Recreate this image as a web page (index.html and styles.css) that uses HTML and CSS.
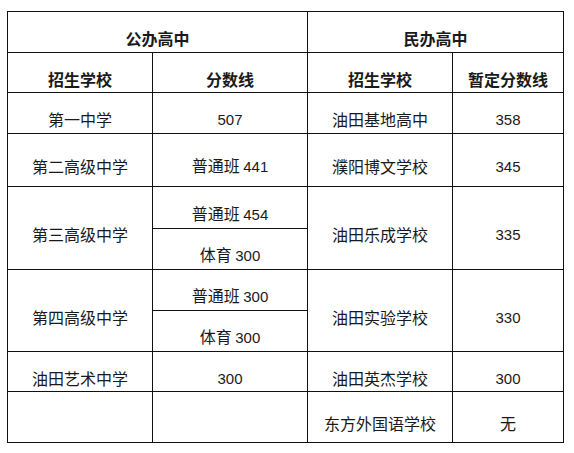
FILE: index.html
```html
<!DOCTYPE html>
<html lang="zh">
<head>
<meta charset="utf-8">
<link rel="stylesheet" href="styles.css">
</head>
<body>
<table class="scores">
  <colgroup>
    <col class="c1"><col class="c2"><col class="c3"><col class="c4">
  </colgroup>
  <tr class="h41">
    <th colspan="2">公办高中</th>
    <th colspan="2">民办高中</th>
  </tr>
  <tr class="h40">
    <th>招生学校</th><th>分数线</th><th>招生学校</th><th>暂定分数线</th>
  </tr>
  <tr class="h41">
    <td>第一中学</td><td><span class="num">507</span></td><td>油田基地高中</td><td><span class="num">358</span></td>
  </tr>
  <tr class="h53">
    <td>第二高级中学</td><td>普通班 <span class="num">441</span></td><td>濮阳博文学校</td><td><span class="num">345</span></td>
  </tr>
  <tr class="h42">
    <td rowspan="2">第三高级中学</td><td>普通班 <span class="num">454</span></td><td rowspan="2">油田乐成学校</td><td rowspan="2"><span class="num">335</span></td>
  </tr>
  <tr class="h41">
    <td>体育 <span class="num">300</span></td>
  </tr>
  <tr class="h41">
    <td rowspan="2">第四高级中学</td><td>普通班 <span class="num">300</span></td><td rowspan="2">油田实验学校</td><td rowspan="2"><span class="num">330</span></td>
  </tr>
  <tr class="h41">
    <td>体育 <span class="num">300</span></td>
  </tr>
  <tr class="h40">
    <td>油田艺术中学</td><td><span class="num">300</span></td><td>油田英杰学校</td><td><span class="num">300</span></td>
  </tr>
  <tr class="h51">
    <td></td><td></td><td>东方外国语学校</td><td>无</td>
  </tr>
</table>
</body>
</html>
```

FILE: styles.css
```css
html, body {
  margin: 0;
  padding: 0;
  background: #ffffff;
}

body {
  padding: 11px 0 0 7px;
}

.scores {
  border-collapse: collapse;
  table-layout: fixed;
  width: 556px;
  font-family: "Noto Sans CJK SC", "Liberation Sans", sans-serif;
  font-size: 16px;
  color: #1a1a1a;
}

.c1 { width: 145px; }
.c2 { width: 155px; }
.c3 { width: 145px; }
.c4 { width: 111px; }

.scores th,
.scores td {
  border: 1px solid #111111;
  padding: 12px 2px 0 2px;
  text-align: center;
  vertical-align: middle;
  line-height: 18px;
  white-space: nowrap;
}

.scores th {
  font-weight: bold;
}

.num {
  font-family: "Liberation Sans", sans-serif;
  font-size: 15px;
}

.h40 { height: 40px; }
.h41 { height: 41px; }
.h42 { height: 42px; }
.h51 { height: 51px; }
.h53 { height: 53px; }
```
